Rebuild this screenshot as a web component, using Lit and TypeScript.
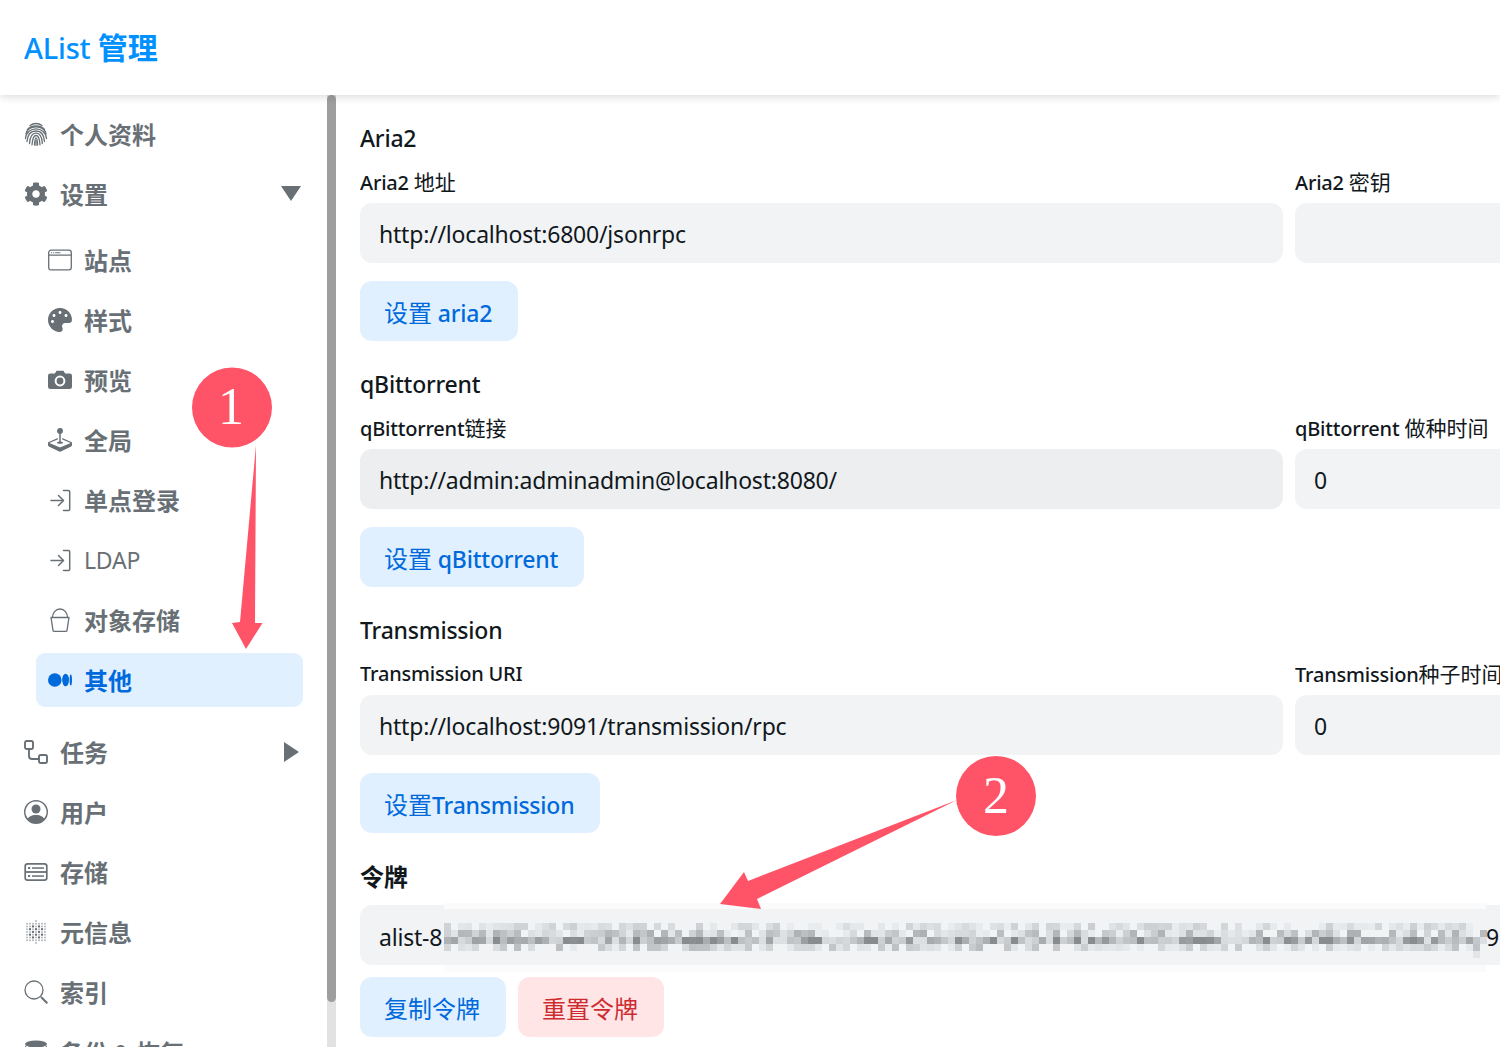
import { LitElement, html, css, svg } from "lit";
import { customElement } from "lit/decorators.js";

const runs = (s: string) =>
  s.split(/([\u3400-\u9fff]+)/).filter(Boolean).map((p) =>
    /[\u3400-\u9fff]/.test(p) ? html`<span class="cjk">${p}</span>` : p
  );

const ic = (vb: string, body: unknown) =>
  html`<svg class="ico" viewBox=${vb} fill="currentColor">${body}</svg>`;

const line = 'fill:none;stroke:currentColor;stroke-linecap:round;stroke-linejoin:round';

const icons: Record<string, unknown> = {
  finger: ic("0 0 24 24", svg`<g style="${line};stroke-width:1.300">
    <path d="M6 3.500C9.500 .8 14.500 .8 18 3.500"/><path d="M3.500 7.500C7 2.800 17 2.800 20.500 7.500"/>
    <path d="M2 12C3 6.500 8 4.800 12 4.800s9 1.700 10 7.200"/><path d="M1.500 16.500C2 10 7 6.800 12 6.800s9.800 3.200 10.500 9.700"/>
    <path d="M3 19.500C3.500 12 7.500 9 12 9s8 3 8.500 10.500"/><path d="M5.500 21.500C6 14.500 8.500 11.200 12 11.200s6 3.300 6.300 10.300"/>
    <path d="M8 22.800C8.500 16.500 10 13.500 12 13.500s3.600 3 4 9.300"/><path d="M10.500 23C10.800 18 11.200 15.800 12 15.800s1.400 2.200 1.600 7.200"/><path d="M12 18.500V23.300"/></g>`),
  gear: ic("0 0 512 512", svg`<path d="M487.400 315.700l-42.600-24.600c4.300-23.200 4.300-47 0-70.200l42.600-24.600c4.900-2.800 7.100-8.600 5.500-14-11.100-35.600-30-67.800-54.700-94.600-3.800-4.100-10-5.100-14.800-2.300L380.800 110c-17.900-15.400-38.500-27.300-60.800-35.100V25.800c0-5.600-3.900-10.500-9.400-11.700-36.700-8.200-74.300-7.800-109.200 0-5.500 1.200-9.400 6.100-9.400 11.700V75c-22.200 7.900-42.800 19.800-60.800 35.100L88.700 85.500c-4.900-2.800-11-1.900-14.800 2.300-24.700 26.700-43.600 58.900-54.700 94.600-1.700 5.400.6 11.200 5.500 14L67.300 221c-4.300 23.200-4.300 47 0 70.200l-42.600 24.600c-4.900 2.800-7.100 8.600-5.500 14 11.100 35.600 30 67.800 54.700 94.600 3.800 4.100 10 5.100 14.800 2.300l42.600-24.600c17.900 15.400 38.500 27.300 60.800 35.100v49.200c0 5.600 3.900 10.500 9.400 11.700 36.700 8.200 74.300 7.800 109.200 0 5.500-1.200 9.400-6.100 9.400-11.700v-49.200c22.200-7.900 42.800-19.800 60.800-35.100l42.600 24.600c4.900 2.800 11 1.900 14.800-2.300 24.700-26.700 43.600-58.900 54.700-94.600 1.500-5.500-.7-11.300-5.600-14.100zM256 336c-44.100 0-80-35.900-80-80s35.900-80 80-80 80 35.900 80 80-35.900 80-80 80z"/>`),
  window: ic("0 0 24 24", svg`<rect x="0.700" y="2.200" width="22.600" height="19.600" rx="2.400" style="${line};stroke-width:1.300"/><path d="M1 7.200H23" style="${line};stroke-width:1.300"/><g opacity=".75"><circle cx="3.500" cy="4.700" r=".7"/><circle cx="5.600" cy="4.700" r=".7"/><rect x="7" y="4.100" width="5.500" height="1.200" rx=".5"/></g>`),
  palette: ic("0 0 512 512", svg`<path d="M204.300 5C104.900 24.400 24.800 104.300 5.200 203.400c-37 187 131.700 326.400 258.800 306.700 41.200-6.400 61.400-54.600 42.500-91.700-23.100-45.400 9.900-98.400 60.900-98.400h79.700c35.800 0 64.800-29.600 64.900-65.300C511.500 97.100 368.100-26.900 204.300 5zM96 320c-17.700 0-32-14.300-32-32s14.300-32 32-32 32 14.300 32 32-14.300 32-32 32zm32-128c-17.700 0-32-14.300-32-32s14.300-32 32-32 32 14.300 32 32-14.300 32-32 32zm128-64c-17.700 0-32-14.300-32-32s14.300-32 32-32 32 14.300 32 32-14.300 32-32 32zm128 64c-17.700 0-32-14.300-32-32s14.300-32 32-32 32 14.300 32 32-14.300 32-32 32z"/>`),
  camera: ic("0 0 24 24", svg`<path fill-rule="evenodd" d="M8.500 2.800h7l1.600 2.700h4.700A2.200 2.200 0 0 1 24 7.700v11.100a2.200 2.200 0 0 1-2.200 2.200H2.200A2.200 2.200 0 0 1 0 18.800V7.700a2.200 2.200 0 0 1 2.200-2.200h4.700zM12 7.600a5.400 5.400 0 1 0 0 10.800 5.400 5.400 0 0 0 0-10.800zm0 2a3.400 3.400 0 1 1 0 6.800 3.400 3.400 0 0 1 0-6.800z"/>`),
  joystick: ic("0 0 16 16", svg`<path d="M10 2a2 2 0 0 1-1.500 1.937v5.087c.863.083 1.500.377 1.500.726 0 .414-.895.75-2 .75s-2-.336-2-.75c0-.35.637-.643 1.500-.726V3.937A2 2 0 1 1 10 2z"/><path d="M0 9.665v1.717a1 1 0 0 0 .553.894l6.553 3.277a2 2 0 0 0 1.788 0l6.553-3.277a1 1 0 0 0 .553-.894V9.665c0-.1-.06-.19-.152-.23L9.500 6.715v.993l5.227 2.178a.125.125 0 0 1 .001.23l-5.940 2.546a2 2 0 0 1-1.576 0l-5.940-2.546a.125.125 0 0 1 .001-.23L6.500 7.708l-.013-.988L.152 9.435a.25.25 0 0 0-.152.23z"/>`),
  login: ic("0 0 24 24", svg`<g style="${line};stroke-width:1.500"><path d="M3 12.500H15"/><path d="M10.500 7.500l5 5-5 5"/><path d="M15.500 2.500H20.500a1.200 1.200 0 0 1 1.200 1.200v17.600a1.200 1.200 0 0 1-1.200 1.200H15.500"/></g>`),
  bucket: ic("0 0 24 24", svg`<g style="${line};stroke-width:1.300"><path d="M4.500 9.500C4.500 5 7.500 1 12 1s7.500 4 7.500 8.500"/><path d="M3 9.500h18l-2 12.800a1.200 1.200 0 0 1-1.200 1H6.200a1.200 1.200 0 0 1-1.200-1z"/></g>`),
  medium: ic("0 0 24 24", svg`<ellipse cx="6.800" cy="12" rx="6.800" ry="6.800"/><ellipse cx="17.600" cy="12" rx="3.400" ry="6.300"/><ellipse cx="22.800" cy="12" rx="1.200" ry="5.600"/>`),
  task: ic("0 0 24 24", svg`<g style="${line};stroke-width:1.900"><rect x="1" y="1" width="8" height="8" rx="1.800"/><rect x="15" y="15" width="8" height="8" rx="1.800"/><path d="M5 9v7a3 3 0 0 0 3 3h7"/></g>`),
  user: ic("0 0 16 16", svg`<path d="M11 6a3 3 0 1 1-6 0 3 3 0 0 1 6 0z"/><path fill-rule="evenodd" d="M0 8a8 8 0 1 1 16 0A8 8 0 0 1 0 8zm8-7a7 7 0 0 0-5.468 11.370C3.242 11.226 4.805 10 8 10s4.757 1.225 5.468 2.370A7 7 0 0 0 8 1z"/>`),
  storage: ic("0 0 24 24", svg`<g style="${line};stroke-width:1.700"><rect x="1.200" y="3.800" width="21.600" height="16.400" rx="2.400"/></g><path d="M1.500 11.100h21v1.800h-21z"/><rect x="4" y="7" width="2.200" height="2" rx=".6"/><rect x="8" y="7.300" width="12" height="1.500"/><rect x="4" y="15" width="2.200" height="2" rx=".6"/><rect x="8" y="15.300" width="12" height="1.500"/>`),
  meta: ic("0 0 24 24", svg`${[...Array(9).keys()].flatMap((r) =>
    [...Array(7).keys()].map((c) => {
      const x = 3 + c * 3, y = 1 + r * 2.75;
      const edge = (r === 0 || r === 8) && c !== 3;
      if (edge) return svg``;
      const dark = r > 1 && r < 7 && c > 0 && c < 6 && (r + c) % 2 === 0;
      return svg`<circle cx=${x} cy=${y} r=${dark ? 1.15 : 0.9} opacity=${dark ? 1 : 0.55}/>`;
    }))}`),
  search: ic("0 0 24 24", svg`<g style="${line};stroke-width:1.300"><circle cx="10" cy="10" r="9"/></g><path d="M16.300 17.700l1.400-1.400 5.800 5.800a1 1 0 0 1-1.400 1.400z"/>`),
  db: ic("0 0 24 24", svg`<ellipse cx="12" cy="4" rx="11" ry="3.600"/><path d="M1 5v6c0 2 5 3.600 11 3.600S23 13 23 11V5c0 2-5 3.600-11 3.600S1 7 1 5z"/>`),
};

type Item = { icon: string; text: string; caret?: "down" | "right"; active?: boolean };

const top1: Item[] = [
  { icon: "finger", text: "个人资料" },
  { icon: "gear", text: "设置", caret: "down" },
];
const subs: Item[] = [
  { icon: "window", text: "站点" },
  { icon: "palette", text: "样式" },
  { icon: "camera", text: "预览" },
  { icon: "joystick", text: "全局" },
  { icon: "login", text: "单点登录" },
  { icon: "login", text: "LDAP" },
  { icon: "bucket", text: "对象存储" },
  { icon: "medium", text: "其他", active: true },
];
const top2: Item[] = [
  { icon: "task", text: "任务", caret: "right" },
  { icon: "user", text: "用户" },
  { icon: "storage", text: "存储" },
  { icon: "meta", text: "元信息" },
  { icon: "search", text: "索引" },
  { icon: "db", text: "备份 & 恢复" },
];

const sections = [
  { title: "Aria2", l1: "Aria2 地址", v1: "http://localhost:6800/jsonrpc", l2: "Aria2 密钥", v2: "", btn: "设置 aria2" },
  { title: "qBittorrent", l1: "qBittorrent链接", v1: "http://admin:adminadmin@localhost:8080/", l2: "qBittorrent 做种时间", v2: "0", btn: "设置 qBittorrent", hover: true },
  { title: "Transmission", l1: "Transmission URI", v1: "http://localhost:9091/transmission/rpc", l2: "Transmission种子时间", v2: "0", btn: "设置Transmission" },
];

function mosaic() {
  let seed = 20240611;
  const rnd = () => ((seed = (seed * 1664525 + 1013904223) >>> 0) / 4294967296);
  const rects: unknown[] = [];
  const base = [0.34, 0.62, 1, 0.5];
  for (let c = 0; c < 149; c++) {
    const cw = rnd() < 0.08 ? 0.3 : 1;
    for (let r = 0; r < 4; r++) {
      const k = Math.pow(rnd(), 1.4) * base[r] * cw + (r === 2 ? 0.18 : 0);
      if (k < 0.06) continue;
      const v = Math.min(k, 0.95);
      const g = Math.round(241 - v * 110);
      rects.push(svg`<rect x=${c * 7} y=${20 + r * 7} width="7" height="7" fill=${`rgb(${g},${g + 3},${g + 5})`}/>`);
    }
  }
  rects.push(svg`<rect x="1029" y="48" width="7" height="7" fill="#e3e5e8"/>`);
  return svg`${rects}`;
}

@customElement("app-root")
export class AppRoot extends LitElement {
  static styles = css`
    :host {
      display: block;
      position: relative;
      height: 1047px;
      overflow: hidden;
      background: #fff;
      color: #11181c;
      font-family: "Noto Sans", "Noto Sans CJK SC", sans-serif;
      letter-spacing: -0.2px;
    }
    .cjk { letter-spacing: 0; font-family: "Noto Sans CJK SC", sans-serif; }
    .header {
      position: relative;
      z-index: 2;
      height: 95px;
      box-sizing: border-box;
      padding: 0 0 3px 24px;
      display: flex;
      align-items: center;
      background: #fff;
      box-shadow: 0 2px 8px rgba(0, 0, 0, 0.14);
      color: #0091ff;
      font-size: 29px;
      font-weight: 500;
    }
    .header .cjk { font-weight: 700; font-size: 30px; }
    .body { display: flex; height: 952px; }
    .side { width: 336px; flex: none; display: flex; overflow: hidden; }
    .nav {
      width: 327px;
      flex: none;
      box-sizing: border-box;
      padding: 12px 24px 0 12px;
      display: flex;
      flex-direction: column;
      gap: 6px;
      color: #687076;
    }
    .track { width: 9px; flex: none; background: #e2e2e2; }
    .thumb { height: 907px; background: #9e9e9e; border-radius: 5px; }
    .item {
      height: 54px;
      flex: none;
      display: flex;
      align-items: center;
      gap: 12px;
      padding: 0 12px;
      border-radius: 9px;
      font-size: 23px;
    }
    .item .cjk { font-weight: 700; font-size: 24px; }
    .item.active { background: #e1f0ff; color: #006adc; }
    .sub { display: flex; flex-direction: column; gap: 6px; padding: 6px 0 12px 24px; }
    .ico { width: 24px; height: 24px; flex: none; }
    .label-text { flex: 1; line-height: 36px; }
    .caret { flex: none; width: 20px; height: 16px; margin-right: -10px; color: #687076; }
    .main { flex: 1; min-width: 0; padding: 25px 0 0 24px; overflow: hidden; }
    .section { margin-bottom: 25px; }
    h2 {
      margin: 0 0 12px;
      font-size: 23px;
      line-height: 36px;
      height: 36px;
      font-weight: 500;
    }
    h2 .cjk { font-weight: 700; font-size: 24px; }
    .cols { display: grid; grid-template-columns: 923px 923px; gap: 12px; }
    .field { display: flex; flex-direction: column; }
    label {
      font-size: 20px;
      line-height: 27px;
      height: 27px;
      font-weight: 500;
      margin-bottom: 8px;
      white-space: nowrap;
    }
    label .cjk { font-weight: 400; font-size: 21px; }
    input, .token {
      box-sizing: border-box;
      width: 923px;
      height: 60px;
      border: 0;
      outline: 0;
      border-radius: 12px;
      padding: 2px 19px 0;
      background: #f1f3f5;
      color: #11181c;
      font: inherit;
      font-size: 23px;
      letter-spacing: inherit;
    }
    input.hover { background: #eceef0; }
    .btn {
      height: 60px;
      border: 0;
      border-radius: 12px;
      padding: 0 26px 0 24px;
      background: #e1f0ff;
      color: #006adc;
      font: inherit;
      font-size: 23px;
      letter-spacing: inherit;
      font-weight: 500;
      white-space: nowrap;
    }
    .btn .cjk { font-weight: 400; font-size: 24px; }
    .btn.danger { background: #ffe5e5; color: #cd2b31; }
    .btn-row { display: flex; gap: 12px; margin-top: 18px; }
    .token-title { margin-bottom: 11px; }
    .token {
      width: 1400px;
      padding: 0 19px;
      display: flex;
      align-items: center;
      white-space: nowrap;
    }
    .tok-text { flex: none; margin-top: 4px; }
    .prefix { width: 65px; }
    .mask { position: relative; width: 1042px; height: 60px; flex: none; }
    .mask svg { position: absolute; left: 0; top: -2px; width: 1042px; height: 69px; overflow: visible; }
    .token-row { margin-top: 12px; }
    .notes { position: absolute; inset: 0; width: 1500px; height: 1047px; z-index: 3; pointer-events: none; }
    .notes text { font-family: "Liberation Serif", serif; font-size: 52px; fill: #fff; text-anchor: middle; }
  `;

  private item(i: Item) {
    return html`<div class="item ${i.active ? "active" : ""}">
      ${icons[i.icon]}
      <span class="label-text">${runs(i.text)}</span>
      ${i.caret === "down"
        ? html`<svg class="caret" viewBox="0 0 20 16" fill="currentColor"><path d="M0 0h20L10 15z"/></svg>`
        : i.caret === "right"
        ? html`<svg class="caret" viewBox="0 0 20 20" style="height:20px" fill="currentColor"><path d="M3 0l15 10L3 20z"/></svg>`
        : ""}
    </div>`;
  }

  render() {
    return html`
      <header class="header"><span>AList <span class="cjk">管理</span></span></header>
      <div class="body">
        <aside class="side">
          <nav class="nav">
            ${top1.map((i) => this.item(i))}
            <div class="sub">${subs.map((i) => this.item(i))}</div>
            ${top2.map((i) => this.item(i))}
          </nav>
          <div class="track"><div class="thumb"></div></div>
        </aside>
        <main class="main">
          ${sections.map(
            (s) => html`<section class="section">
              <h2>${s.title}</h2>
              <div class="cols">
                <div class="field"><label>${runs(s.l1)}</label><input class=${s.hover ? "hover" : ""} .value=${s.v1} /></div>
                <div class="field"><label>${runs(s.l2)}</label><input .value=${s.v2} /></div>
              </div>
              <div class="btn-row"><button class="btn">${runs(s.btn)}</button></div>
            </section>`
          )}
          <section>
            <h2 class="token-title">${runs("令牌")}</h2>
            <div class="token">
              <span class="tok-text prefix">alist-8</span>
              <span class="mask">
                <svg viewBox="0 0 1042 69"><rect width="1042" height="69" fill="#fbfbfc"/><rect y="6" width="1042" height="56" fill="#f1f3f5"/>${mosaic()}</svg>
              </span>
              <span class="tok-text">9</span>
            </div>
            <div class="btn-row token-row">
              <button class="btn">${runs("复制令牌")}</button>
              <button class="btn danger">${runs("重置令牌")}</button>
            </div>
          </section>
        </main>
      </div>
      <svg class="notes" viewBox="0 0 1500 1047">
        <circle cx="232" cy="407.500" r="40" fill="#ff5468"/>
        <text x="231" y="424">1</text>
        <path d="M256 445L255 623L262.500 623L246 649L232 623L240 622Z" fill="#ff5468"/>
        <circle cx="996" cy="796" r="40" fill="#ff5468"/>
        <text x="996" y="813">2</text>
        <path d="M957 800L748 881L744 872L720 904L761 909L757 899Z" fill="#ff5468"/>
      </svg>
    `;
  }
}
